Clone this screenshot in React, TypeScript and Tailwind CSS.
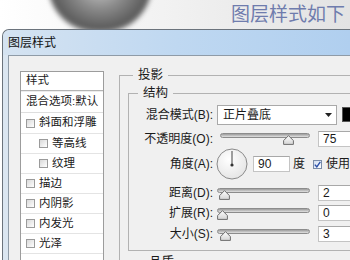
import React from 'react';

const cjk = { fontFamily: '"Liberation Sans", "Noto Sans CJK SC", sans-serif' };

const Box: React.FC<{ checked?: boolean }> = ({ checked }) => (
  <div
    className={`w-[9px] h-[9px] flex-none border flex items-center justify-center ${
      checked ? 'border-[#7a8ca8] bg-gradient-to-br from-[#cfdcf0] to-white' : 'border-[#9a9a9a] bg-gradient-to-br from-[#d8d8d8] to-white'
    }`}
  >
    {checked && (
      <svg width="7" height="7" viewBox="0 0 7 7">
        <path d="M0.8 3.6 L2.8 5.8 L6.3 0.8" fill="none" stroke="#2a4fa8" strokeWidth="1.4" />
      </svg>
    )}
  </div>
);

const Thumb = () => (
  <svg width="11" height="10" viewBox="0 0 11 10">
    <defs>
      <linearGradient id="tg" x1="0" y1="0" x2="0" y2="1">
        <stop offset="0" stopColor="#ffffff" />
        <stop offset="1" stopColor="#d4d4d4" />
      </linearGradient>
    </defs>
    <path d="M5.5 0.6 L10.4 5.6 L10.4 9.4 L0.6 9.4 L0.6 5.6 Z" fill="url(#tg)" stroke="#6e6e6e" strokeWidth="1" />
  </svg>
);

const Slider: React.FC<{ width: number; pct: number }> = ({ width, pct }) => (
  <div className="relative h-[12px] flex-none" style={{ width }}>
    <div className="mt-[1px] h-[5px] rounded-full border border-[#8c8c8c] bg-gradient-to-b from-[#9c9c9c] to-[#e2e2e2]" />
    <div className="absolute top-[2px]" style={{ left: Math.round(pct * (width - 11)) }}>
      <Thumb />
    </div>
  </div>
);

const Field: React.FC<{ value: string; w?: string }> = ({ value, w = 'w-[40px]' }) => (
  <div className={`${w} h-[16px] flex-none bg-white border border-[#c4c4c4] border-t-[#a8a8a8] flex items-center pl-[4px] text-[12px] text-[#1a1a1a]`}>
    {value}
  </div>
);

const Label: React.FC<{ text: string }> = ({ text }) => (
  <div className="w-[84px] flex-none text-right text-[12px] text-[#1a1a1a] whitespace-nowrap">{text}</div>
);

const items: { label: string; sub?: boolean; h: string }[] = [
  { label: '斜面和浮雕', h: 'h-[21px]' },
  { label: '等高线', sub: true, h: 'h-[20px]' },
  { label: '纹理', sub: true, h: 'h-[20px]' },
  { label: '描边', h: 'h-[20px]' },
  { label: '内阴影', h: 'h-[20px]' },
  { label: '内发光', h: 'h-[20px]' },
  { label: '光泽', h: 'h-[20px]' },
  { label: '', h: 'h-[20px]' },
];

export default function App() {
  return (
    <div
      className="w-[350px] h-[260px] overflow-hidden relative bg-gradient-to-r from-white via-[#f1f1f1] to-[#e3e3e3]"
      style={cjk}
    >
      {/* blurred object in the photo behind the dialog */}
      <div className="absolute left-[48px] top-[-16px] w-[104px] h-[48px] rounded-b-[50px] blur-[2.5px] bg-[radial-gradient(ellipse_at_50%_5%,#c8c8c8_0%,#8a8a8a_35%,#5c5c5c_65%,#a8a8a8_100%)]" />
      <div className="relative h-[29px] flex items-center justify-end pr-[5px]">
        <span className="text-[19px] leading-none text-[#6f7cad]">图层样式如下</span>
      </div>

      <div className="relative ml-[2px] h-[231px] flex flex-col border-l border-t border-[#6b737c] rounded-tl-[7px] bg-[#dbe6f1]">
        <div className="h-[25px] flex-none flex items-center pl-[5px] rounded-tl-[7px] bg-gradient-to-r from-[#d5e3f1] via-[#bfd8f1] to-[#b0cfef]">
          <span className="text-[12px] text-[#111]">图层样式</span>
        </div>
        <div className="flex-1 flex pl-[5px] min-h-0">
          <div className="flex-1 flex items-start border-l border-t border-[#8f9ba7] bg-[#f0f0f0] pl-[11px] pt-[10px] min-h-0">
            {/* styles list */}
            <div className="mt-[5px] w-[84px] flex-none border-l border-t border-r border-[#9c9c9c] bg-white text-[11.5px] text-[#1a1a1a]">
              <div className="h-[19px] flex items-center pl-[5px] border-b border-[#b4b4b4]">样式</div>
              <div className="h-[22px] flex items-center pl-[5px] border-b border-[#dedede] border-t border-t-[#ececec] whitespace-nowrap">混合选项:默认</div>
              {items.map((it, i) => (
                <div
                  key={i}
                  className={`${it.h} flex items-center gap-[4px] border-b border-[#e4e4e4] ${it.sub ? 'pl-[18px]' : 'pl-[5px]'}`}
                >
                  {it.label && <Box />}
                  <span className="whitespace-nowrap">{it.label}</span>
                </div>
              ))}
            </div>

            {/* drop shadow panel */}
            <fieldset className="ml-[15px] w-[262px] flex-none border border-[#b2b2b2] pl-[8px] pr-[6px]">
              <legend className="ml-[5px] px-[5px] text-[12.5px] leading-[18px] text-[#1a1a1a]">投影</legend>
              <fieldset className="border border-[#b2b2b2] pb-[5px]">
                <legend className="ml-[9px] px-[5px] text-[12.5px] leading-[18px] text-[#1a1a1a]">结构</legend>

                <div className="h-[25px] flex items-center">
                  <Label text="混合模式(B):" />
                  <div className="ml-[4px] w-[120px] h-[20px] flex-none bg-white border border-[#a9a9a9] flex items-center justify-between pl-[5px] pr-[4px]">
                    <span className="text-[12px] text-[#1a1a1a]">正片叠底</span>
                    <svg width="7" height="4" viewBox="0 0 7 4">
                      <path d="M0 0 H7 L3.5 4 Z" fill="#222" />
                    </svg>
                  </div>
                  <div className="ml-[5px] w-[16px] h-[15px] flex-none bg-black border border-[#555]" />
                </div>

                <div className="h-[23px] flex items-center">
                  <Label text="不透明度(O):" />
                  <div className="ml-[7px]">
                    <Slider width={90} pct={0.8} />
                  </div>
                  <div className="ml-[8px]">
                    <Field value="75" />
                  </div>
                </div>

                <div className="h-[28px] flex items-center">
                  <Label text="角度(A):" />
                  <div className="ml-[3px] w-[32px] h-[32px] flex-none">
                    <svg width="32" height="32" viewBox="0 0 32 32">
                      <defs>
                        <radialGradient id="dg" cx="0.4" cy="0.35" r="0.7">
                          <stop offset="0" stopColor="#ffffff" />
                          <stop offset="1" stopColor="#e4e4e4" />
                        </radialGradient>
                      </defs>
                      <circle cx="16" cy="16" r="15" fill="url(#dg)" stroke="#8a8a8a" strokeWidth="1" />
                      <line x1="16" y1="3" x2="16" y2="17" stroke="#444" strokeWidth="1" />
                      <circle cx="16" cy="17" r="1.6" fill="#333" />
                    </svg>
                  </div>
                  <div className="ml-[5px]">
                    <Field value="90" w="w-[37px]" />
                  </div>
                  <span className="ml-[3px] text-[12px] text-[#1a1a1a]">度</span>
                  <div className="ml-[8px]">
                    <Box checked />
                  </div>
                  <span className="ml-[4px] text-[12px] text-[#1a1a1a] whitespace-nowrap">使用全局光</span>
                </div>

                <div className="mt-[5px] h-[20px] flex items-center">
                  <Label text="距离(D):" />
                  <div className="ml-[4px]">
                    <Slider width={93} pct={0.02} />
                  </div>
                  <div className="ml-[8px]">
                    <Field value="2" />
                  </div>
                </div>

                <div className="h-[20px] flex items-center">
                  <Label text="扩展(R):" />
                  <div className="ml-[4px]">
                    <Slider width={93} pct={0} />
                  </div>
                  <div className="ml-[8px]">
                    <Field value="0" />
                  </div>
                </div>

                <div className="h-[22px] flex items-center">
                  <Label text="大小(S):" />
                  <div className="ml-[4px]">
                    <Slider width={93} pct={0.04} />
                  </div>
                  <div className="ml-[8px]">
                    <Field value="3" />
                  </div>
                </div>
              </fieldset>

              <fieldset className="mt-[2px] border border-[#b2b2b2] h-[40px]">
                <legend className="ml-[15px] px-[5px] text-[12.5px] leading-[18px] text-[#1a1a1a]">品质</legend>
              </fieldset>
            </fieldset>
          </div>
        </div>
      </div>
    </div>
  );
}
